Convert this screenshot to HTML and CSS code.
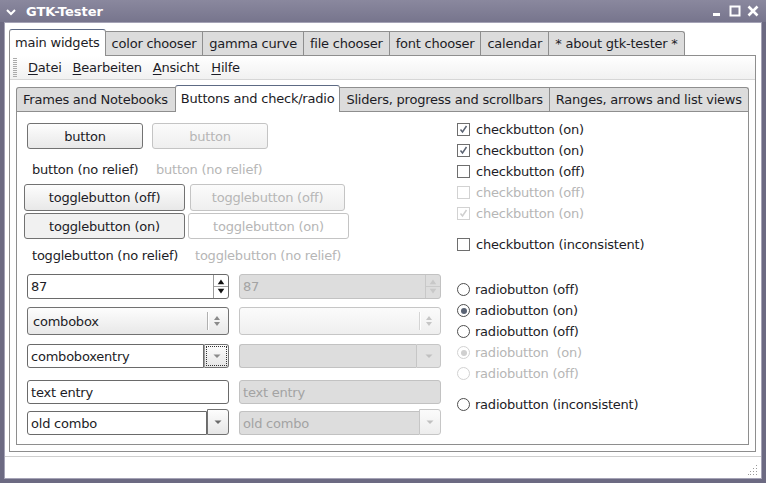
FILE: index.html
```html
<!DOCTYPE html>
<html>
<head>
<meta charset="utf-8">
<link rel="stylesheet" href="styles.css">
</head>
<body>
<div class="window">
  <div class="titlebar">
    <svg class="chev" width="10" height="8" viewBox="0 0 10 8"><path d="M1 2 L5 6 L9 2" fill="none" stroke="#fff" stroke-width="2"/></svg>
    <span class="title">GTK-Tester</span>
    <span class="spacer"></span>
    <svg class="wbtn" width="14" height="14" viewBox="0 0 14 14"><rect x="3" y="9" width="7" height="3" fill="#fff"/></svg>
    <svg class="wbtn" width="14" height="14" viewBox="0 0 14 14"><rect x="2.5" y="2.5" width="9" height="9" fill="none" stroke="#fff" stroke-width="2"/></svg>
    <svg class="wbtn" width="14" height="14" viewBox="0 0 14 14"><path d="M2.5 2.5 L11.5 11.5 M11.5 2.5 L2.5 11.5" stroke="#fff" stroke-width="2.6"/></svg>
  </div>
  <div class="client">
    <div class="nb outer">
      <div class="tabs">
        <div class="tab active">main widgets</div>
        <div class="tab">color chooser</div>
        <div class="tab">gamma curve</div>
        <div class="tab">file chooser</div>
        <div class="tab">font chooser</div>
        <div class="tab">calendar</div>
        <div class="tab">* about gtk-tester *</div>
      </div>
      <div class="page outer-page">
        <div class="menubar">
          <div class="handle"></div>
          <span class="mi"><u>D</u>atei</span>
          <span class="mi"><u>B</u>earbeiten</span>
          <span class="mi"><u>A</u>nsicht</span>
          <span class="mi"><u>H</u>ilfe</span>
        </div>
        <div class="nb inner">
          <div class="tabs">
            <div class="tab">Frames and Notebooks</div>
            <div class="tab active">Buttons and check/radio</div>
            <div class="tab">Sliders, progress and scrollbars</div>
            <div class="tab">Ranges, arrows and list views</div>
          </div>
          <div class="page inner-page">
            <div class="left">
              <div class="row r-btn">
                <div class="btn b1">button</div>
                <div class="btn b1 dis">button</div>
              </div>
              <div class="row r-nr">
                <div class="nr n1">button (no relief)</div>
                <div class="nr dis">button (no relief)</div>
              </div>
              <div class="row r-toff">
                <div class="btn t1">togglebutton (off)</div>
                <div class="btn t2 dis">togglebutton (off)</div>
              </div>
              <div class="row r-ton">
                <div class="btn t1 on">togglebutton (on)</div>
                <div class="btn t3 dis on">togglebutton (on)</div>
              </div>
              <div class="row r-tnr">
                <div class="nr n2">togglebutton (no relief)</div>
                <div class="nr dis">togglebutton (no relief)</div>
              </div>
              <div class="row r-spin">
                <div class="entry spin"><span class="etext">87</span>
                  <div class="spinbtns">
                    <svg width="15" height="23" viewBox="0 0 15 23"><path d="M4 9 L7.5 4 L11 9 Z" fill="#111"/><line x1="0" y1="11.5" x2="15" y2="11.5" stroke="#9a9a9a"/><path d="M4 14 L7.5 19 L11 14 Z" fill="#111"/></svg>
                  </div>
                </div>
                <div class="entry spin dis"><span class="etext">87</span>
                  <div class="spinbtns">
                    <svg width="15" height="23" viewBox="0 0 15 23"><path d="M4 9 L7.5 4 L11 9 Z" fill="#c8c8c8"/><line x1="0" y1="11.5" x2="15" y2="11.5" stroke="#c8c8c8"/><path d="M4 14 L7.5 19 L11 14 Z" fill="#c8c8c8"/></svg>
                  </div>
                </div>
              </div>
              <div class="row r-combo">
                <div class="combo"><span class="ctext">combobox</span><span class="csep"></span>
                  <svg width="18" height="14" viewBox="0 0 18 14"><path d="M4 6 L7 2 L10 6 Z" fill="#8a8a8a"/><path d="M4 8 L7 12 L10 8 Z" fill="#8a8a8a"/></svg>
                </div>
                <div class="combo dis"><span class="ctext"></span><span class="csep"></span>
                  <svg width="18" height="14" viewBox="0 0 18 14"><path d="M4 6 L7 2 L10 6 Z" fill="#c6c6c6"/><path d="M4 8 L7 12 L10 8 Z" fill="#c6c6c6"/></svg>
                </div>
              </div>
              <div class="row r-cbe">
                <div class="cbe">
                  <div class="entry cbe-entry"><span class="etext">comboboxentry</span></div>
                  <div class="cbe-btn focus"><div class="focusrect"><svg width="10" height="6" viewBox="0 0 10 6"><path d="M1.5 1.5 L8.5 1.5 L5 5 Z" fill="#8a8a8a"/></svg></div></div>
                </div>
                <div class="cbe dis">
                  <div class="entry cbe-entry"><span class="etext"></span></div>
                  <div class="cbe-btn"><svg width="10" height="6" viewBox="0 0 10 6"><path d="M1.5 1.5 L8.5 1.5 L5 5 Z" fill="#c0c0c0"/></svg></div>
                </div>
              </div>
              <div class="row r-text">
                <div class="entry te"><span class="etext">text entry</span></div>
                <div class="entry te dis"><span class="etext">text entry</span></div>
              </div>
              <div class="row r-old">
                <div class="cbe old">
                  <div class="entry cbe-entry"><span class="etext">old combo</span></div>
                  <div class="cbe-btn"><svg width="10" height="6" viewBox="0 0 10 6"><path d="M1.5 1.5 L8.5 1.5 L5 5 Z" fill="#6a6a6a"/></svg></div>
                </div>
                <div class="cbe old dis">
                  <div class="entry cbe-entry"><span class="etext">old combo</span></div>
                  <div class="cbe-btn"><svg width="10" height="6" viewBox="0 0 10 6"><path d="M1.5 1.5 L8.5 1.5 L5 5 Z" fill="#c0c0c0"/></svg></div>
                </div>
              </div>
            </div>
            <div class="right">
              <div class="opt"><span class="cb"><svg width="11" height="11" viewBox="0 0 11 11"><path d="M2.5 5.5 L4.5 8 L8.5 2" fill="none" stroke="#5b6372" stroke-width="1.5"/></svg></span>checkbutton (on)</div>
              <div class="opt"><span class="cb"><svg width="11" height="11" viewBox="0 0 11 11"><path d="M2.5 5.5 L4.5 8 L8.5 2" fill="none" stroke="#5b6372" stroke-width="1.5"/></svg></span>checkbutton (on)</div>
              <div class="opt"><span class="cb"></span>checkbutton (off)</div>
              <div class="opt dis"><span class="cb"></span>checkbutton (off)</div>
              <div class="opt dis"><span class="cb"><svg width="11" height="11" viewBox="0 0 11 11"><path d="M2.5 5.5 L4.5 8 L8.5 2" fill="none" stroke="#cfcfcf" stroke-width="1.5"/></svg></span>checkbutton (on)</div>
              <div class="opt gap"><span class="cb"></span>checkbutton (inconsistent)</div>
              <div class="opt gap2"><span class="rb"></span>radiobutton (off)</div>
              <div class="opt"><span class="rb on"></span>radiobutton (on)</div>
              <div class="opt"><span class="rb"></span>radiobutton (off)</div>
              <div class="opt dis"><span class="rb on"></span>radiobutton &nbsp;(on)</div>
              <div class="opt dis"><span class="rb"></span>radiobutton (off)</div>
              <div class="opt gap"><span class="rb"></span>radiobutton (inconsistent)</div>
            </div>
          </div>
        </div>
      </div>
    </div>
    <div class="statusbar">
      <svg class="grip" width="10" height="10" viewBox="0 0 10 10">
        <rect x="8" y="0" width="1" height="1" fill="#9a9a9a"/>
        <rect x="5" y="3" width="1" height="1" fill="#9a9a9a"/><rect x="8" y="3" width="1" height="1" fill="#9a9a9a"/>
        <rect x="2" y="6" width="1" height="1" fill="#9a9a9a"/><rect x="5" y="6" width="1" height="1" fill="#9a9a9a"/><rect x="8" y="6" width="1" height="1" fill="#9a9a9a"/>
        <rect x="0" y="9" width="1" height="1" fill="#9a9a9a"/><rect x="2" y="9" width="1" height="1" fill="#9a9a9a"/><rect x="5" y="9" width="1" height="1" fill="#9a9a9a"/><rect x="8" y="9" width="1" height="1" fill="#9a9a9a"/>
      </svg>
    </div>
  </div>
</div>
</body>
</html>
```
FILE: styles.css
```css
* { box-sizing: border-box; }
html, body { margin: 0; padding: 0; }
body {
  width: 766px; height: 483px; overflow: hidden;
  font-family: "DejaVu Sans", "Liberation Sans", sans-serif;
  font-size: 13px; color: #1c1c26; letter-spacing: -0.22px;
  background: #5f5d73;
}
.window {
  width: 766px; height: 483px;
  display: flex; flex-direction: column;
  background: #6c6a82;
  padding: 0 4px 4px 4px;
}
.titlebar {
  height: 22px; margin: 0 -4px;
  display: flex; align-items: center;
  background: linear-gradient(#8a889e, #77758d);
  color: #fff; padding: 0 6px 0 6px;
}
.chev { margin-right: 10px; margin-top: 2px; }
.title { font-weight: bold; font-size: 13px; letter-spacing: 0; }
.spacer { flex: 1; }
.wbtn { margin-left: 4px; }
.client {
  flex: 1; background: #fff;
  border: 1px solid #a5a3b6;
  display: flex; flex-direction: column;
  padding: 6px 5px 0 4px;
}
.nb { display: flex; flex-direction: column; }
.tabs { display: flex; align-items: flex-end; height: 26px; }
.tab {
  height: 24px; padding: 0 6px 0 5px;
  background: #dcdcdc;
  border: 1px solid #8e8e8e; border-bottom: none;
  margin-right: -1px; flex: none;
  line-height: 23px; white-space: nowrap;
  position: relative;
}
.outer .tab { padding: 0 6px 0 6px; }
.tab:first-child { border-top-left-radius: 3px; }
.tab:last-child { border-top-right-radius: 3px; }
.tab.active {
  background: #fff;
  border-color: #8e8e8e; border-top-color: #5d6a84;
  border-radius: 3px 3px 0 0;
  z-index: 2; margin-bottom: -1px; height: 27px;
  line-height: 25px;
}
.outer .tab.active { padding: 0 5px 0 5px; }
.page { border: 1px solid #8e8e8e; background: #fff; }
.outer-page {
  height: 397px; display: flex; flex-direction: column;
}
.menubar {
  height: 24px; display: flex; align-items: center;
  background: linear-gradient(#ffffff, #f1f1f1);
  border-bottom: 1px solid #d6d6d6;
  padding-left: 3px;
}
.handle {
  width: 4px; height: 19px; margin-right: 11px;
  background: repeating-linear-gradient(#ababab 0 1px, transparent 1px 2px);
}
.mi { margin-right: 11px; }
.mi:nth-child(4) { margin-right: 12px; }
.mi u { text-decoration-thickness: 1px; text-underline-offset: 2px; }
.inner { margin: 5px 6px 6px 6px; }
.inner .tab { padding: 0 6px; }
.inner .tab:first-child { padding: 0 7px 0 6px; }
.inner-page {
  height: 334px; display: flex;
  padding-left: 7px;
}
.left { width: 417px; flex: none; display: flex; flex-direction: column; }
.row { display: flex; }
.row > * { flex: none; }
.btn {
  display: flex; align-items: center; justify-content: center;
  border: 1px solid #727272; border-radius: 3px;
  background: linear-gradient(#fdfdfd, #e8e8e8);
  white-space: nowrap;
}
.btn.dis { border-color: #c4c4c4; background: linear-gradient(#fbfbfb, #efefef); color: #b6b6b6; }
.btn.on { background: #f1f1f1; }
.btn.dis.on { background: #fff; }
.dis { color: #b6b6b6; }
.r-btn { margin-top: 11px; height: 26px; margin-left: 3px; }
.b1 { width: 116px; margin-right: 9px; }
.r-nr { margin-top: 7px; height: 26px; align-items: center; margin-left: 8px; }
.n1 { width: 124px; }
.r-toff { margin-top: 2px; height: 27px; }
.t1 { width: 161px; margin-right: 5px; }
.t2 { width: 155px; }
.r-ton { margin-top: 2px; height: 26px; }
.r-ton .t1 { margin-right: 3px; }
.t3 { width: 161px; }
.r-tnr { margin-top: 3px; height: 26px; align-items: center; margin-left: 8px; }
.n2 { width: 163px; }
.entry {
  border: 1px solid #6a6a6a; border-radius: 3px; background: #fff;
  display: flex; align-items: center; white-space: nowrap;
}
.entry.dis, .cbe.dis .cbe-entry { background: #dddddd; border-color: #c2c2c2; color: #a3a3a3; }
.etext { padding-left: 3px; flex: 1; }
.r-spin { margin-top: 6px; height: 25px; margin-left: 3px; }
.spin { width: 202px; margin-right: 10px; }
.spinbtns { width: 15px; height: 100%; border-left: 1px solid #9a9a9a; display: flex; align-items: center; }
.spin.dis .spinbtns { border-left-color: #c8c8c8; }
.r-combo { margin-top: 8px; height: 28px; margin-left: 3px; }
.combo {
  width: 202px; margin-right: 10px;
  border: 1px solid #727272; border-radius: 3px;
  background: linear-gradient(#fdfdfd, #e8e8e8);
  display: flex; align-items: center;
}
.combo.dis { border-color: #c6c6c6; background: linear-gradient(#fbfbfb, #efefef); }
.ctext { flex: 1; padding-left: 5px; }
.csep { width: 2px; height: 18px; background: #b0b0b0; border-right: 1px solid #fff; margin-right: 1px; }
.combo.dis .csep { background: #d4d4d4; }
.r-cbe { margin-top: 9px; height: 24px; margin-left: 3px; }
.cbe { width: 202px; margin-right: 10px; display: flex; }
.cbe-entry { flex: 1; border-radius: 3px 0 0 3px; }
.cbe-btn {
  width: 25px; border: 1px solid #727272; border-left: 1px solid #a0a0a0;
  border-radius: 0 3px 3px 0;
  background: linear-gradient(#fdfdfd, #e6e6e6);
  display: flex; align-items: center; justify-content: center;
}
.focusrect {
  width: 21px; height: 20px; border: 1px dotted #333;
  display: flex; align-items: center; justify-content: center;
}
.cbe.dis .cbe-entry { border-right: none; }
.cbe.dis .cbe-btn { border-color: #c6c6c6; background: #e2e2e2; }
.r-text { margin-top: 12px; height: 24px; margin-left: 3px; }
.te { width: 202px; margin-right: 10px; }
.r-old { margin-top: 5px; height: 26px; margin-left: 3px; }
.old .cbe-entry { margin-top: 2px; border-radius: 3px 0 0 3px; }
.old .cbe-btn { width: 22px; border-left-color: #727272; }
.old.dis .cbe-btn { background: linear-gradient(#fbfbfb, #ededed); border-color: #c6c6c6; }
.right {
  margin-left: 16px; padding-top: 7px;
  display: flex; flex-direction: column;
}
.opt { height: 21px; display: flex; align-items: center; white-space: nowrap; }
.opt.gap { margin-top: 10px; }
.opt.gap2 { margin-top: 24px; }
.cb {
  width: 13px; height: 13px; border: 1px solid #6e6e6e; background: #fff;
  margin-right: 6px; display: flex; align-items: center; justify-content: center;
}
.opt.dis .cb { border-color: #d2d2d2; }
.rb {
  width: 13px; height: 13px; border: 1px solid #4e4e4e; border-radius: 50%;
  background: #fff; margin-right: 5px; position: relative;
}
.rb.on::after {
  content: ""; position: absolute; left: 2.5px; top: 2.5px;
  width: 6px; height: 6px; border-radius: 50%; background: #5a6374;
}
.opt.dis .rb { border-color: #d2d2d2; }
.opt.dis .rb.on::after { background: #d0d0d0; }
.statusbar {
  flex: 1; margin: 4px -5px 0 -4px;
  border-top: 1px solid #cfcfcf;
  display: flex; align-items: flex-end; justify-content: flex-end;
  padding: 0 3px 3px 0;
}
```
